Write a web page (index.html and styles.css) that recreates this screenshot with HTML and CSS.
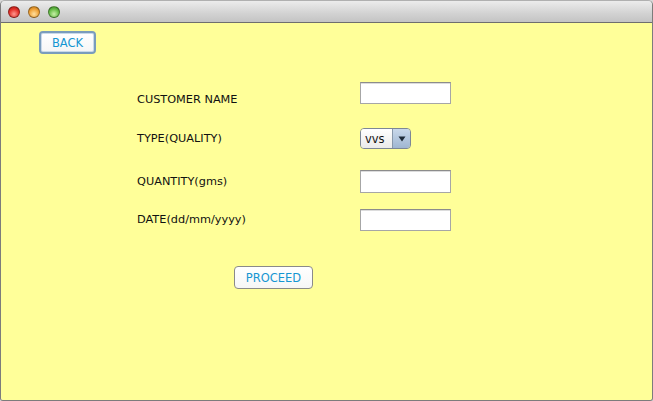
FILE: index.html
```html
<!DOCTYPE html>
<html>
<head>
<meta charset="utf-8">
<link rel="stylesheet" href="styles.css">
</head>
<body>
<div class="window">
  <div class="titlebar">
    <span class="light red"></span>
    <span class="light yellow"></span>
    <span class="light green"></span>
  </div>
  <div class="content">
    <button class="btn back">BACK</button>
    <div class="form">
      <div class="row r1">
        <span class="label">CUSTOMER NAME</span>
        <span class="field"></span>
      </div>
      <div class="row r2">
        <span class="label">TYPE(QUALITY)</span>
        <span class="combo"><span class="combo-text">vvs</span><span class="combo-arrow"><svg width="8" height="6" viewBox="0 0 8 6"><path d="M0.5 0.5 L7.5 0.5 L4 5.5 Z" fill="#1e2a38"/></svg></span></span>
      </div>
      <div class="row r3">
        <span class="label">QUANTITY(gms)</span>
        <span class="field"></span>
      </div>
      <div class="row r4">
        <span class="label">DATE(dd/mm/yyyy)</span>
        <span class="field"></span>
      </div>
    </div>
    <button class="btn proceed">PROCEED</button>
  </div>
</div>
</body>
</html>
```
FILE: styles.css
```css
html, body {
  margin: 0;
  padding: 0;
  background: #d8d8d8;
}
.window {
  width: 653px;
  height: 401px;
  box-sizing: border-box;
  display: flex;
  flex-direction: column;
  border-radius: 5px 5px 3px 3px;
  overflow: hidden;
  border: 1px solid #7c7c7c;
  border-top-color: #b0b0b0;
  font-family: "DejaVu Sans", "Liberation Sans", sans-serif;
}
.titlebar {
  height: 21px;
  flex: none;
  display: flex;
  align-items: center;
  gap: 8px;
  padding-left: 7px;
  background: linear-gradient(#ececec, #d2d2d2 60%, #c4c4c4);
  border-bottom: 1px solid #6e6e6e;
}
.light {
  width: 12px;
  height: 12px;
  border-radius: 50%;
  box-sizing: border-box;
  border: 1px solid rgba(0,0,0,0.35);
}
.light.red { background: radial-gradient(circle at 50% 70%, #ff9a90 0, #e5332b 55%, #a3120d 100%); }
.light.yellow { background: radial-gradient(circle at 50% 70%, #ffe0a0 0, #f0a33a 55%, #b06a0c 100%); }
.light.green { background: radial-gradient(circle at 50% 70%, #c8f0a8 0, #6abf4a 55%, #2f7d1c 100%); }
.content {
  flex: 1;
  background: #ffff99;
  display: flex;
  flex-direction: column;
  align-items: flex-start;
  padding: 8px 0 0 38px;
}
.btn {
  font-family: "DejaVu Sans", "Liberation Sans", sans-serif;
  font-size: 11.5px;
  color: #1596d2;
  background: linear-gradient(#ffffff, #f6f6f6);
  padding: 0;
  cursor: default;
}
.back {
  width: 57px;
  height: 23px;
  border: 2px solid #7a9cbc;
  border-radius: 4px;
  box-shadow: inset 0 0 0 1px #c9d9ea;
}
.form {
  margin-top: 28px;
  margin-left: 98px;
  display: flex;
  flex-direction: column;
}
.row {
  display: flex;
  align-items: center;
}
.label {
  width: 223px;
  font-size: 11.3px;
  color: #111;
  line-height: 14px;
}
.r1 { align-items: flex-start; }
.r1 .label { margin-top: 11px; }
.r2 { margin-top: 21px; }
.r3 { margin-top: 21px; }
.r3 .field { height: 23px; }
.r4 { margin-top: 16px; }
.field {
  width: 91px;
  height: 22px;
  box-sizing: border-box;
  background: #fff;
  border: 1px solid #a6a6a6;
  border-top-color: #8c8c8c;
  box-shadow: inset 0 1px 0 #dcdcdc;
}
.combo {
  width: 51px;
  height: 21px;
  box-sizing: border-box;
  display: flex;
  border: 1px solid #7d8796;
  border-radius: 4px;
  overflow: hidden;
  font-size: 11.5px;
}
.combo-text {
  flex: 1;
  display: flex;
  align-items: center;
  padding-left: 4px;
  background: linear-gradient(#ffffff, #eaeaea);
  color: #111;
}
.combo-arrow {
  width: 17px;
  display: flex;
  align-items: center;
  justify-content: center;
  background: linear-gradient(#c9d8ea, #9fb6d2);
  border-left: 1px solid #8898ab;
}
.proceed {
  margin-top: 35px;
  margin-left: 195px;
  width: 79px;
  height: 23px;
  border: 1px solid #8a8a8a;
  border-radius: 4px;
}
```
